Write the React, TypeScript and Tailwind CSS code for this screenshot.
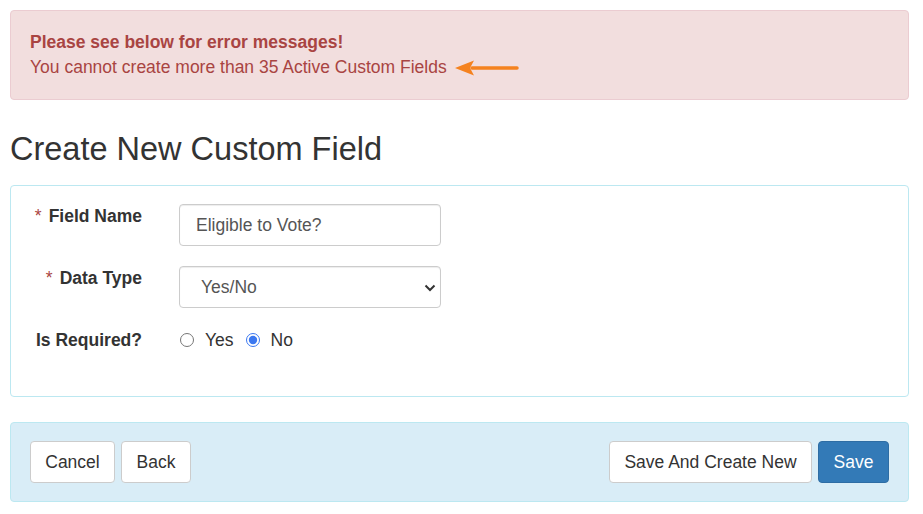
import React from "react";

export default function App() {
  return (
    <div className="bg-white w-[923px] h-[514px] pl-[10px] pr-[14px] pt-[10px] text-[#333] text-[17.5px]" style={{ fontFamily: '"Liberation Sans", Arial, sans-serif' }}>
      <div className="border border-[#ebccd1] bg-[#f2dede] text-[#a94442] rounded-[4px] px-[19px] py-[19px] leading-[25px]">
        <div className="font-bold">Please see below for error messages!</div>
        <div className="flex items-center gap-[7px]">
          <span>You cannot create more than 35 Active Custom Fields</span>
          <svg width="66" height="18" viewBox="0 0 66 18" className="shrink-0">
            <path d="M18 9 H63" stroke="#f5821f" strokeWidth="3.5" strokeLinecap="round" />
            <path d="M1 9 L20 1.5 L16 9 L20 16.5 Z" fill="#f5821f" />
          </svg>
        </div>
      </div>

      <h1 className="text-[32.5px] leading-[36px] font-normal mt-[31px] mb-[18px]">Create New Custom Field</h1>

      <div className="border border-[#bce8f1] rounded-[4px] pt-[18px] pb-[43px]">
        <div className="flex">
          <div className="w-[131px] text-right font-bold leading-[24px]">
            <span className="text-[#a94442] font-normal mr-[7px]">*</span>Field Name
          </div>
          <div className="ml-[37px] w-[262px] h-[42px] border border-[#ccc] rounded-[4px] flex items-center px-[16px] text-[#555] shadow-[inset_0_1px_1px_rgba(0,0,0,0.075)]">
            Eligible to Vote?
          </div>
        </div>
        <div className="flex mt-[20px]">
          <div className="w-[131px] text-right font-bold leading-[24px]">
            <span className="text-[#a94442] font-normal mr-[7px]">*</span>Data Type
          </div>
          <div className="relative ml-[37px] w-[262px] h-[42px] border border-[#ccc] rounded-[4px] flex items-center pl-[21px] text-[#555] shadow-[inset_0_1px_1px_rgba(0,0,0,0.075)]">
            Yes/No
            <svg width="12" height="8" viewBox="0 0 12 8" className="absolute right-[4px] top-[17px]">
              <path d="M1.5 1.5 L6 6 L10.5 1.5" stroke="#333" strokeWidth="2" fill="none" />
            </svg>
          </div>
        </div>
        <div className="flex mt-[19px] items-center">
          <div className="w-[131px] text-right font-bold leading-[24px]">Is Required?</div>
          <div className="ml-[37px] flex items-center">
            <label className="flex items-center">
              <input type="radio" name="req" className="w-[14px] h-[14px] m-0 ml-[1px] mr-[11px]" />
              <span>Yes</span>
            </label>
            <label className="flex items-center ml-[12px]">
              <input type="radio" name="req" defaultChecked className="w-[14px] h-[14px] m-0 mr-[11px] accent-[#3b78f0]" />
              <span>No</span>
            </label>
          </div>
        </div>
      </div>

      <div className="mt-[25px] border border-[#bce8f1] bg-[#d9edf7] rounded-[4px] px-[19px] py-[18px] flex justify-between">
        <div className="flex gap-[6px]">
          <button className="w-[85px] h-[42px] bg-white border border-[#ccc] rounded-[4px] text-[#333]">Cancel</button>
          <button className="w-[70px] h-[42px] bg-white border border-[#ccc] rounded-[4px] text-[#333]">Back</button>
        </div>
        <div className="flex gap-[6px]">
          <button className="w-[203px] h-[42px] bg-white border border-[#ccc] rounded-[4px] text-[#333]">Save And Create New</button>
          <button className="w-[71px] h-[42px] bg-[#337ab7] border border-[#2e6da4] rounded-[4px] text-white">Save</button>
        </div>
      </div>
    </div>
  );
}
